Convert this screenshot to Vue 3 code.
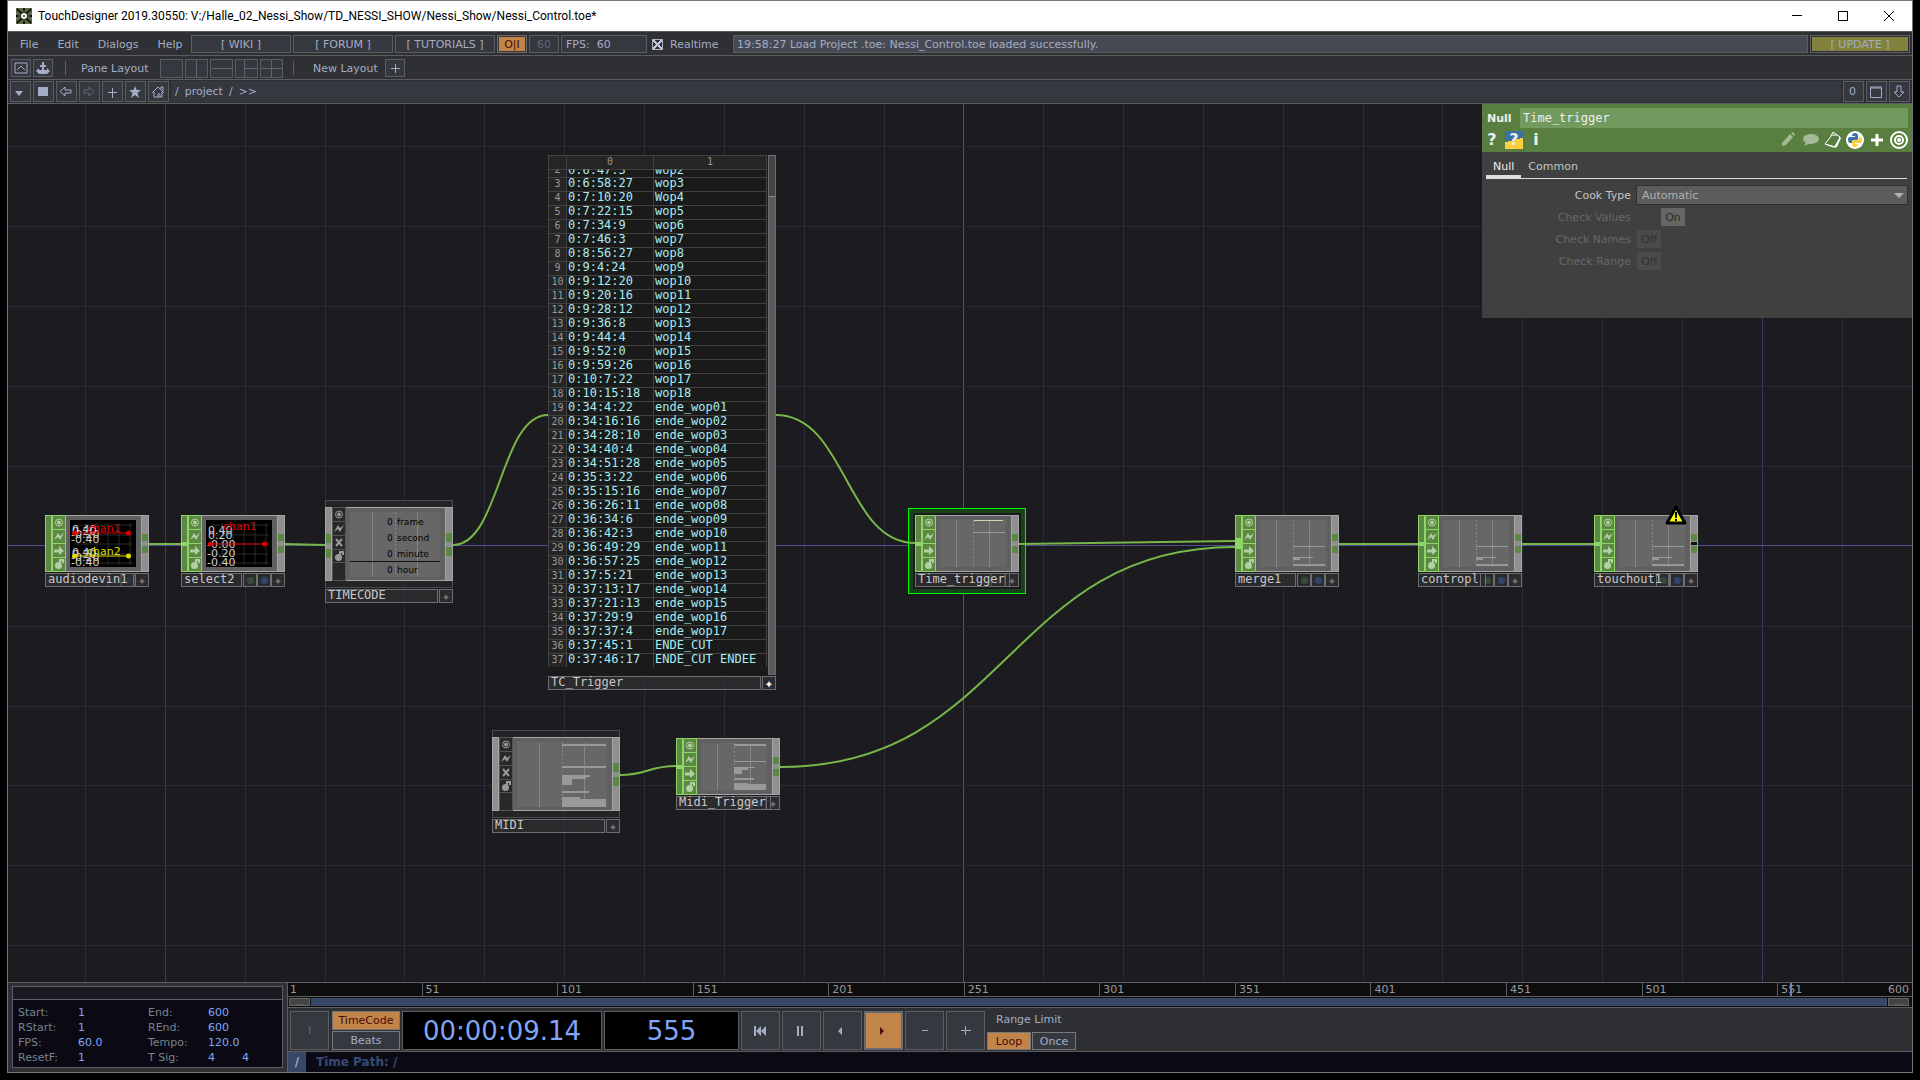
<script setup>
import { ref } from 'vue';

const links = ['WIKI', 'FORUM', 'TUTORIALS'];
const menus = ['File', 'Edit', 'Dialogs', 'Help'];
const layouts = ['', 'M11 0V18', 'M0 9H22', 'M9 0V18M9 9H22', 'M11 0V18M0 9H22'];
const realtime = ref(true);
const opName = ref('Time_trigger');
const cookType = ref('Automatic');

// Network grid
const gridX = [77, 157, 237, 317, 396, 476, 556, 636, 716, 796, 876, 955, 1035, 1115, 1195, 1275, 1355, 1434, 1514, 1594, 1674, 1754, 1834];
const gridY = [42, 122, 202, 282, 362, 441, 522, 602, 681, 761, 841];

const wires = [
  'M141 440H173',
  'M277 440L317 441',
  'M445 441C492 441 492 311 540 311',
  'M768 311C838 311 838 439 907 439',
  'M612 671C640 671 640 662 668 662',
  'M772 663C1000 663 1000 443 1227 443',
  'M1011 440L1227 437',
  'M1331 440H1410',
  'M1514 440H1586',
];

// Operators; bars are [x, y, w, h] inside the small viewer
const smallBars = [[33, 26, 32, 1], [33, 37, 20, 1], [33, 38, 7, 2], [33, 44, 32, 2]];
const nodes = [
  { name: 'audiodevin1', x: 37, y: 411, nameWidth: 89, faint: true, noInput: true, scope: [
    { name: 'chan1', color: '#e00000', y: 13, labelY: 12, ticks: [['0.40', 13], ['0.20', 15], ['-0.20', 18], ['-0.40', 23]] },
    { name: 'chan2', color: '#dcdc00', y: 36, labelY: 35, ticks: [['0.40', 36], ['0.20', 38], ['-0.20', 41], ['-0.40', 46]] },
  ] },
  { name: 'select2', x: 173, y: 411, nameWidth: 61, scope: [
    { name: 'chan1', color: '#e00000', y: 24, labelY: 10, ticks: [['0.40', 14], ['0.20', 19], ['-0.00', 28], ['-0.20', 37], ['-0.40', 46]] },
  ] },
  { name: 'Midi_Trigger', x: 668, y: 634, nameWidth: 95, faint: true, bars: [
    [33, 1, 32, 2], [33, 18, 32, 1], [33, 24, 21, 1], [33, 25, 14, 2], [33, 27, 8, 4],
    [33, 35, 20, 2], [33, 40, 14, 1], [33, 41, 32, 6],
  ] },
  { name: 'Time_trigger', x: 907, y: 411, nameWidth: 95, faint: true, selected: true, bars: [[33, 12, 32, 1]], current: true },
  { name: 'merge1', x: 1227, y: 411, nameWidth: 61, bars: smallBars, double: true },
  { name: 'contropl', x: 1410, y: 411, nameWidth: 68, bars: smallBars },
  { name: 'touchout1', x: 1586, y: 411, nameWidth: 75, bars: smallBars, warning: true },
];
const selected = nodes.find((node) => node.selected);

const timecodeRows = ['frame', 'second', 'minute', 'hour'];
const midiBars = [
  [45, 2, 44, 2], [45, 24, 44, 2], [45, 33, 28, 2], [45, 35, 24, 2], [45, 37, 10, 6],
  [45, 49, 27, 2], [45, 55, 18, 2], [45, 57, 44, 8],
];

const triggers = [
  ['0:6:47:3', 'wop2'], ['0:6:58:27', 'wop3'], ['0:7:10:20', 'Wop4'], ['0:7:22:15', 'wop5'],
  ['0:7:34:9', 'wop6'], ['0:7:46:3', 'wop7'], ['0:8:56:27', 'wop8'], ['0:9:4:24', 'wop9'],
  ['0:9:12:20', 'wop10'], ['0:9:20:16', 'wop11'], ['0:9:28:12', 'wop12'], ['0:9:36:8', 'wop13'],
  ['0:9:44:4', 'wop14'], ['0:9:52:0', 'wop15'], ['0:9:59:26', 'wop16'], ['0:10:7:22', 'wop17'],
  ['0:10:15:18', 'wop18'], ['0:34:4:22', 'ende_wop01'], ['0:34:16:16', 'ende_wop02'],
  ['0:34:28:10', 'ende_wop03'], ['0:34:40:4', 'ende_wop04'], ['0:34:51:28', 'ende_wop05'],
  ['0:35:3:22', 'ende_wop06'], ['0:35:15:16', 'ende_wop07'], ['0:36:26:11', 'ende_wop08'],
  ['0:36:34:6', 'ende_wop09'], ['0:36:42:3', 'ende_wop10'], ['0:36:49:29', 'ende_wop11'],
  ['0:36:57:25', 'ende_wop12'], ['0:37:5:21', 'ende_wop13'], ['0:37:13:17', 'ende_wop14'],
  ['0:37:21:13', 'ende_wop15'], ['0:37:29:9', 'ende_wop16'], ['0:37:37:4', 'ende_wop17'],
  ['0:37:45:1', 'ENDE_CUT'], ['0:37:46:17', 'ENDE_CUT ENDEE'],
];

const checks = [
  { label: 'Check Values', value: 'On' },
  { label: 'Check Names', value: 'Off' },
  { label: 'Check Range', value: 'Off' },
];

const rangeInfo = [
  ['Start:', '1', 'End:', '600'],
  ['RStart:', '1', 'REnd:', '600'],
  ['FPS:', '60.0', 'Tempo:', '120.0'],
  ['ResetF:', '1', 'T Sig:', '4', '4'],
];

// Timeline
const lastFrame = 600;
const frame = ref(555);
const ticks = [1, 51, 101, 151, 201, 251, 301, 351, 401, 451, 501, 551];
const framePos = (f) => `${((f - 1) / (lastFrame - 1)) * 100}%`;

const transport = [
  { label: 'Jump to start', d: 'M0 2H2V12H0ZM7 2V12L2 7ZM12 2V12L7 7Z' },
  { label: 'Pause', d: 'M2 2H4V12H2ZM6 2H8V12H6Z' },
  { label: 'Play reverse', d: 'M6 3V11L2 7Z' },
  { label: 'Play', d: 'M3 3V11L7 7Z', active: true },
  { label: 'Step back', d: 'M4 6H10V7H4Z' },
  { label: 'Step forward', d: 'M2 6H12V7H2ZM6 2H7V11H6Z' },
];
</script>

<template>
  <div class="window">
    <header class="titlebar">
      <svg class="app-icon" viewBox="0 0 16 16">
        <rect width="16" height="16" fill="#5f6b45" />
        <path d="M1 1L6 6M15 1L10 6M1 15L6 10M15 15L10 10M8 0V3M8 13V16M0 8H3M13 8H16" stroke="#15180f" stroke-width="2" />
        <circle cx="8" cy="8" r="4" fill="#20241a" />
        <circle cx="8" cy="8" r="3" fill="#f4f4e8" />
        <circle cx="8" cy="8" r="1" fill="#444" />
      </svg>
      <h1>TouchDesigner 2019.30550: V:/Halle_02_Nessi_Show/TD_NESSI_SHOW/Nessi_Show/Nessi_Control.toe*</h1>
      <div class="window-buttons">
        <button aria-label="Minimize"><svg viewBox="0 0 12 12"><path d="M1 5.5H11" /></svg></button>
        <button aria-label="Maximize"><svg viewBox="0 0 12 12"><path d="M1.5 1.5H10.5V10.5H1.5Z" /></svg></button>
        <button aria-label="Close"><svg viewBox="0 0 12 12"><path d="M1 1L11 11M11 1L1 11" /></svg></button>
      </div>
    </header>

    <!-- Main menu -->
    <div class="bar menu-bar">
      <nav class="menus">
        <button v-for="menu in menus" :key="menu">{{ menu }}</button>
      </nav>
      <a v-for="link in links" :key="link" class="box link-box" href="#">[ {{ link }} ]</a>
      <button class="box io-button">O|I</button>
      <span class="box rate-box">60</span>
      <span class="box fps-box">FPS:&nbsp; 60</span>
      <label class="realtime"><input v-model="realtime" type="checkbox" />Realtime</label>
      <output class="box message">19:58:27 Load Project .toe: Nessi_Control.toe loaded successfully.</output>
      <button class="box update">[ UPDATE ]</button>
    </div>

    <!-- Pane layouts -->
    <div class="bar layout-bar">
      <button class="box icon-box" aria-label="Palette">
        <svg viewBox="0 0 14 14"><path d="M1 2H13V12H1ZM3 9L7 5L11 9" /></svg>
      </button>
      <button class="box icon-box" aria-label="Anchor">
        <svg viewBox="0 0 14 14"><path class="fill" d="M6 1H8V4H10V6H8V9H11V7L14 10L11 13H3L0 10L3 7V9H6V6H4V4H6Z" /></svg>
      </button>
      <i class="sep"></i>
      <span class="pane-label">Pane Layout</span>
      <div class="layouts">
        <button v-for="(d, i) in layouts" :key="i" class="layout" :aria-label="'Layout ' + (i + 1)">
          <svg viewBox="0 0 22 18"><path :d="d" /></svg>
        </button>
      </div>
      <i class="sep"></i>
      <span class="new-label">New Layout</span>
      <button class="box icon-box" aria-label="Add layout">
        <svg viewBox="0 0 14 14"><path d="M7.5 3V12M3 7.5H12" /></svg>
      </button>
    </div>

    <!-- Network path -->
    <div class="bar path-bar">
      <button class="box icon-box" aria-label="Pane type"><svg viewBox="0 0 14 14"><path class="fill" d="M2 6H10L6 11Z" /></svg></button>
      <button class="box icon-box" aria-label="Stop"><svg viewBox="0 0 14 14"><path class="fill" d="M2 2H12V11H2Z" /></svg></button>
      <button class="box icon-box" aria-label="Back"><svg viewBox="0 0 14 14"><path d="M1 6.5L6 2V5H12V8H6V11Z" /></svg></button>
      <button class="box icon-box dim" aria-label="Forward"><svg viewBox="0 0 14 14"><path d="M12 6.5L7 2V5H2V8H7V11Z" /></svg></button>
      <button class="box icon-box" aria-label="Add operator"><svg viewBox="0 0 14 14"><path d="M7.5 3V13M3 7.5H12" /></svg></button>
      <button class="box icon-box" aria-label="Bookmark"><svg viewBox="0 0 14 14"><path class="fill" d="M7 1L8.600 5H13L9.500 8L11 13L7 10L3 13L4.500 8L1 5H5.400Z" /></svg></button>
      <button class="box icon-box" aria-label="Home"><svg viewBox="0 0 14 14"><path d="M1 8L7 2L13 8M3 7V12H11V7M7 12V9H9V12M10 4V2H12V6" /></svg></button>
      <div class="path">
        <span>/</span><a href="#">project</a><span>/</span><a href="#">&gt;&gt;</a>
      </div>
      <div class="pane-buttons">
        <button class="box icon-box">0</button>
        <button class="box icon-box" aria-label="Maximize pane"><svg viewBox="0 0 14 14"><path d="M1.500 3V12.500H12.500V3M1 3H13M1 2H13" /></svg></button>
        <button class="box icon-box" aria-label="Collapse pane"><svg viewBox="0 0 14 14"><path d="M5 1H9V7H12L7 12L2 7H5Z" /></svg></button>
      </div>
    </div>

    <main class="network">
      <svg class="canvas-lines">
        <line v-for="(x, i) in gridX" :key="'x' + x" :x1="x + .5" :x2="x + .5" y1="0" y2="100%" :class="{ major: i % 10 === 1, origin: i === 11 }" />
        <line v-for="y in gridY" :key="'y' + y" x1="0" x2="100%" :y1="y + .5" :y2="y + .5" :class="{ origin: y === 441 }" />
        <!-- Frame round the selected operator, under the wires -->
        <rect class="selection" :x="selected.x - 6.5" :y="selected.y - 6.5" width="117" height="85" />
        <rect class="selection-gap" :x="selected.x - 2" :y="selected.y - 2" width="108" height="76" />
        <path v-for="d in wires" :key="d" :d="d" class="wire" />
      </svg>

      <section
        v-for="node in nodes"
        :key="node.name"
        class="node"
        :class="{ cut: node.warning }"
        :style="{ left: node.x + 'px', top: node.y + 'px' }"
      >
        <div class="node-body">
          <div class="input"><i v-if="!node.noInput" :class="{ double: node.double }"></i></div>
          <svg class="flags-column" viewBox="0 0 14 57">
            <path class="lines" d="M.5 .5H13.500V56.500H.5ZM0 14.500H14M0 28.500H14M0 42.500H14" />
            <circle class="ring" cx="7" cy="7.500" r="3.500" /><circle class="glyph" cx="7" cy="7.500" r="2" />
            <path class="glyph" d="M2 25L6 18L8 21L12 18L8 25L6 22Z" />
            <path class="glyph" d="M2 34.500H7V31L12 36L7 40V37.500H2Z" />
            <path class="ring" d="M8 48V45H11V48" /><circle class="glyph" cx="6.500" cy="50.500" r="3.500" />
          </svg>
          <div class="viewer-frame">
            <svg v-if="node.scope" class="scope" viewBox="0 0 66 47">
              <path class="scope-grid" d="M5 5H63M5 15H63M5 24H63M5 34H63M5 43H63M16 3V45M27 3V45M38 3V45M49 3V45M60 3V45" />
              <g v-for="chan in node.scope" :key="chan.name">
                <text v-for="tick in chan.ticks" :key="tick[0]" :x="tick[0].length > 4 ? 1 : 2" :y="tick[1]" class="tick-label">{{ tick[0] }}</text>
                <text x="17" :y="chan.labelY" :fill="chan.color">{{ chan.name }}</text>
                <path :d="`M4 ${chan.y}H59`" :stroke="chan.color" />
                <circle cx="4.500" :cy="chan.y" r="2.500" :fill="chan.color" />
                <circle cx="58.500" :cy="chan.y" r="2.500" :fill="chan.color" />
              </g>
            </svg>
            <svg v-else class="viewer" viewBox="0 0 66 47">
              <path class="rule" d="M16.500 1V47M49.500 1V47" />
              <path class="rule dotted" d="M33.500 0V47" />
              <rect v-for="(b, i) in node.bars" :key="i" :x="b[0]" :y="b[1]" :width="b[2]" :height="b[3]" />
              <rect v-if="node.current" class="current" x="34" y="0" width="29" height="1" />
            </svg>
          </div>
          <div class="output"><i></i><i></i></div>
        </div>
        <div class="name-bar">
          <span class="name" :style="{ width: node.nameWidth + 'px' }">{{ node.name }}</span>
          <div class="flags" :class="{ faint: node.faint }"><i class="green"></i><i class="blue"></i><i class="plus">✦</i></div>
        </div>
        <svg v-if="node.warning" class="warning" viewBox="0 0 22 20">
          <path d="M11 2L20 18H2Z" fill="#ff0" stroke="#000" stroke-width="3" stroke-linejoin="round" />
          <path d="M11 7V13M11 14V16" stroke="#000" stroke-width="2" />
        </svg>
      </section>

      <!-- Component style operators -->
      <section v-for="comp in ['TIMECODE', 'MIDI']" :key="comp" class="node comp" :class="comp.toLowerCase()">
        <div class="comp-frame">
          <div class="node-body">
            <div class="input"><template v-if="comp === 'TIMECODE'"><b></b><b></b></template></div>
            <svg class="flags-column" viewBox="0 0 14 74">
              <path class="lines" d="M.5 .5H13.500V73.500H.5ZM0 14.500H14M0 28.500H14M0 42.500H14M0 55.500H14" />
              <circle class="ring" cx="7" cy="7.500" r="3.500" /><circle class="glyph" cx="7" cy="7.500" r="2" />
              <path class="glyph" d="M2 25L6 18L8 21L12 18L8 25L6 22Z" />
              <path class="ring" d="M4 32L10 39M10 32L4 39" />
              <path class="ring" d="M8 48V45H11V48" /><circle class="glyph" cx="6.500" cy="50.500" r="3.500" />
            </svg>
            <div class="viewer-frame">
              <svg class="viewer" viewBox="0 0 90 65">
                <path class="rule" d="M22.500 1V65M67.500 1V65" />
                <path class="rule dotted" d="M45.500 0V65" />
                <template v-if="comp === 'TIMECODE'">
                  <g v-for="(row, i) in timecodeRows" :key="row" class="channel">
                    <text x="37" :y="13 + i * 16">0</text>
                    <text x="47" :y="13 + i * 16">{{ row }}</text>
                  </g>
                  <path d="M0 49.500H90" stroke="#111" />
                </template>
                <template v-else>
                  <rect v-for="(b, i) in midiBars" :key="i" :x="b[0]" :y="b[1]" :width="b[2]" :height="b[3]" />
                </template>
              </svg>
            </div>
            <div class="output"><i></i><i></i></div>
          </div>
        </div>
        <div class="name-bar">
          <span class="name">{{ comp }}</span>
          <i class="plus">✦</i>
        </div>
      </section>

      <!-- Trigger list -->
      <section class="node trigger">
        <div class="trigger-view">
          <div class="trigger-scroll">
            <table>
              <thead>
                <tr><th></th><th>0</th><th>1</th></tr>
              </thead>
              <tbody>
                <tr v-for="(row, i) in triggers" :key="i">
                  <th>{{ i + 2 }}</th>
                  <td>{{ row[0] }}</td>
                  <td>{{ row[1] }}</td>
                </tr>
              </tbody>
            </table>
          </div>
          <div class="trigger-track"></div>
        </div>
        <div class="name-bar">
          <span class="name">TC_Trigger</span>
          <i class="plus bright">✦</i>
        </div>
      </section>

      <!-- Parameters -->
      <aside class="params">
        <div class="params-head">
          <div class="params-name">
            <label for="op-name">Null</label>
            <input id="op-name" v-model="opName" type="text" />
          </div>
          <div class="params-tools">
            <button aria-label="Help" class="help">?</button>
            <button aria-label="Python help" class="py-help">?</button>
            <button aria-label="Info" class="info">i</button>
            <span class="grow"></span>
            <button aria-label="Edit" class="dim"><svg viewBox="0 0 18 18"><path fill="#fff" d="M2 12L10 3L13 6L6 14L2 15ZM11 2L13 1L15 4L14 5Z" /></svg></button>
            <button aria-label="Comment" class="dim"><svg viewBox="0 0 18 18"><ellipse cx="9" cy="8" rx="8" ry="5" fill="#fff" /><path d="M4 11L2 15L9 12Z" fill="#fff" /></svg></button>
            <button aria-label="Clipboard"><svg viewBox="0 0 18 18"><path d="M8 4L1 13L9 16H12L16 6L13 4ZM7 5L9 1L13 4M1 13L12 16" fill="none" stroke="#fff" /><path d="M10 16L16 6L17 7L13 16Z" fill="#fff" /></svg></button>
            <button aria-label="Python"><svg viewBox="0 0 18 18">
              <circle cx="9" cy="9" r="9" fill="#fff" />
              <path d="M6 5Q6 2 9 2Q12 2 12 5V8Q12 9 10 9H7Q6 9 6 12H4Q2 12 2 8Q2 6 4 6H9V5Z" fill="#3b70a4" />
              <path d="M12 13Q12 16 9 16Q6 16 6 13V11Q6 9 8 9H11Q13 9 13 6H14Q16 6 16 10Q16 12 14 12H9V13Z" fill="#fdcf40" />
            </svg></button>
            <button aria-label="Add"><svg viewBox="0 0 18 18"><path d="M9 3V15M3 9H15" stroke="#fff" stroke-width="3" /></svg></button>
            <button aria-label="Target"><svg viewBox="0 0 18 18"><g fill="none" stroke="#fff" stroke-width="2"><circle cx="9" cy="9" r="8" /><circle cx="9" cy="9" r="4" /></g><circle cx="9" cy="9" r="2" fill="#fff" /></svg></button>
          </div>
        </div>
        <div class="tabs">
          <button class="active">Null</button>
          <button>Common</button>
        </div>
        <div class="param">
          <label for="cook-type">Cook Type</label>
          <div class="select-wrap">
            <select id="cook-type" v-model="cookType"><option>Automatic</option></select>
          </div>
        </div>
        <div v-for="check in checks" :key="check.label" class="param disabled">
          <label :for="check.label">{{ check.label }}</label>
          <button :id="check.label" :class="{ on: check.value === 'On' }" disabled>{{ check.value }}</button>
        </div>
      </aside>
    </main>

    <footer class="timeline">
      <div class="range-panel">
        <div class="range-head"></div>
        <div class="range-grid">
          <div v-for="row in rangeInfo" :key="row[0]" class="range-row">
            <span>{{ row[0] }}</span><b>{{ row[1] }}</b><span>{{ row[2] }}</span><b>{{ row[3] }}</b><b>{{ row[4] }}</b>
          </div>
        </div>
      </div>
      <div class="time-main">
        <div class="ruler">
          <span v-for="t in ticks" :key="t" class="tick" :style="{ left: framePos(t) }">{{ t }}</span>
          <span class="last-tick">{{ lastFrame }}</span>
          <i class="playhead" :style="{ left: framePos(frame) }"></i>
        </div>
        <div class="work-range">
          <button aria-label="Range start">...</button>
          <i></i>
          <button aria-label="Range end">...</button>
        </div>
        <div class="controls">
          <button class="control marker">I</button>
          <div class="mode">
            <button class="active">TimeCode</button>
            <button>Beats</button>
          </div>
          <output class="display timecode">00:00:09.14</output>
          <output class="display frames">{{ frame }}</output>
          <button v-for="item in transport" :key="item.label" class="control" :class="{ active: item.active }" :aria-label="item.label">
            <svg viewBox="0 0 14 14"><path :d="item.d" /></svg>
          </button>
          <div class="limit">
            <span>Range Limit</span>
            <div class="limit-buttons">
              <button class="active">Loop</button>
              <button>Once</button>
            </div>
          </div>
        </div>
        <div class="time-path"><button>/</button><span>Time Path: /</span></div>
      </div>
    </footer>
  </div>
</template>

<style>
body {
  margin: 0;
  background: #000;
}
</style>

<style scoped>
* {
  box-sizing: border-box;
}

.window {
  display: flex;
  flex-direction: column;
  height: calc(100vh - 7px);
  min-height: 900px;
  margin: 0 7px 7px;
  border: 1px solid #77777a;
  background: #2f3033;
  color: #a3adc6;
  font-family: "DejaVu Sans", sans-serif;
  font-size: 11px;
  overflow: hidden;
}

button,
input,
select {
  margin: 0;
  padding: 0;
  border: 0;
  background: none;
  color: inherit;
  font: inherit;
}

a {
  color: inherit;
  text-decoration: none;
}

svg {
  display: block;
  flex: none;
}

/* Title bar */
.titlebar {
  display: flex;
  align-items: center;
  flex: none;
  height: 30px;
  padding-left: 8px;
  background: #fff;
  color: #000;
}

.app-icon {
  width: 16px;
  height: 16px;
}

h1 {
  flex: 1;
  margin: 0 0 0 6px;
  font: 12px Roboto, sans-serif;
}

.window-buttons {
  display: flex;
}

.window-buttons button {
  display: grid;
  place-items: center;
  width: 46px;
  height: 28px;
}

.window-buttons svg {
  width: 12px;
  height: 12px;
  fill: none;
  stroke: #000;
}

/* Toolbars */
.bar {
  display: flex;
  align-items: center;
  flex: none;
  height: 24px;
  padding-top: 1px;
  border-top: 1px solid #5c5d60;
  white-space: nowrap;
}

.box {
  display: flex;
  align-items: center;
  justify-content: center;
  flex: none;
  height: 18px;
  border: 1px solid #5c5d60;
  background: #363840;
}

.menu-bar {
  gap: 2px;
  padding-right: 2px;
}

.menus {
  display: flex;
  gap: 19px;
  width: 181px;
  padding-left: 12px;
}

.link-box {
  width: 100px;
}

.io-button {
  width: 30px;
  background: #c28549;
  border-color: #6a6a6c;
  color: #4a0808;
  box-shadow: inset 0 0 0 1px #3a3634;
}

.rate-box {
  width: 30px;
  color: #606470;
}

.fps-box {
  justify-content: flex-start;
  width: 86px;
  padding-left: 4px;
}

.realtime {
  display: flex;
  align-items: center;
  gap: 7px;
  width: 82px;
  padding-left: 3px;
}

.realtime input {
  width: 11px;
  height: 11px;
  appearance: none;
  border: 1px solid #b0b4c0;
  background:
    linear-gradient(45deg, transparent 40%, #c0c6d8 40% 60%, transparent 60%),
    linear-gradient(-45deg, transparent 40%, #c0c6d8 40% 60%, transparent 60%);
}

.message {
  flex: 1;
  justify-content: flex-start;
  padding-left: 3px;
  background: #474a52;
}

.update {
  width: 100px;
  background: #82813d;
  box-shadow: inset 0 0 0 1px #2f3033;
}

.layout-bar {
  padding-left: 3px;
}

.layout-bar .icon-box {
  width: 20px;
  margin-right: 2px;
}

.icon-box svg {
  width: 14px;
  height: 14px;
  fill: none;
  stroke: #a3adc6;
}

.icon-box .fill {
  fill: #a3adc6;
  stroke: none;
}

.sep {
  width: 1px;
  height: 14px;
  margin: 0 10px;
  background: #5c5d60;
}

.pane-label {
  width: 84px;
  padding-left: 5px;
}

.layouts {
  display: flex;
  gap: 2px;
}

.layout {
  width: 23px;
  height: 19px;
  border: 1px solid #5c5d60;
  background: #363840;
}

.layout svg {
  width: 21px;
  height: 17px;
  fill: none;
  stroke: #66686e;
}

.new-label {
  width: 81px;
  padding-left: 9px;
}

.path-bar {
  gap: 2px;
  height: 25px;
  padding: 0 2px;
  border-bottom: 1px solid #5c5d60;
}

.path-bar .icon-box {
  width: 21px;
  height: 21px;
  padding-right: 2px;
}

.path-bar .dim svg {
  opacity: .4;
}

.path {
  display: flex;
  align-items: center;
  flex: 1;
  gap: 6px;
  height: 21px;
  padding-left: 4px;
  background: #363840;
}

.pane-buttons {
  display: flex;
  gap: 2px;
}

/* Network editor */
.network {
  position: relative;
  flex: 1;
  overflow: hidden;
  background: #1b1b20;
}

.canvas-lines {
  width: 100%;
  height: 100%;
  stroke: #2b2a3c;
}

.canvas-lines .major {
  stroke: #3c3864;
}

.canvas-lines .origin {
  stroke: #534f8d;
}

.selection {
  fill: #164418;
  stroke: #00f800;
}

.selection-gap {
  fill: #1b1b20;
  stroke: none;
}

.wire {
  fill: none;
  stroke: #76b749;
  stroke-width: 2;
}

.node {
  position: absolute;
  width: 104px;
}

.node-body {
  display: flex;
  height: 57px;
  background: #606060;
}

.input {
  width: 7px;
  padding-top: 26px;
  border: 1px solid #8fd466;
  background: #5d8844;
}

.input i {
  display: block;
  height: 4px;
  margin: 0 -1px;
  background: #8fd466;
}

.input .double {
  height: 11px;
  margin-top: -4px;
}

.flags-column {
  width: 14px;
  background: #5d8844;
}

.lines {
  fill: none;
  stroke: #8fd466;
}

.glyph {
  fill: #b3cfa4;
}

.ring {
  fill: none;
  stroke: #b3cfa4;
  stroke-width: 2;
}

.flags-column circle.ring {
  stroke-width: 1;
}

.viewer-frame {
  flex: 1;
  padding: 4px;
  border: solid #a5a5a8;
  border-width: 1px 0;
}

.viewer,
.scope {
  width: 66px;
  height: 47px;
  background: #676767;
}

.viewer rect {
  fill: #999;
}

.viewer .current {
  fill: #d5d5aa;
}

.rule {
  stroke: #868686;
}

.dotted {
  stroke-dasharray: 2 2;
}

.scope {
  background: #000;
  overflow: hidden;
}

.scope-grid {
  stroke: #2a2a2a;
}

.scope text {
  font-size: 11px;
}

.scope .tick-label {
  fill: #ccc;
}

.output {
  display: flex;
  flex-direction: column;
  justify-content: center;
  gap: 5px;
  width: 8px;
  border: 1px solid #a5a5a8;
  background: #8f8f8f;
}

.output i {
  height: 7px;
  background: #5d8844;
}

.cut .output {
  background: linear-gradient(#8f8f8f 26px, #111 26px 29px, #8f8f8f 29px);
}

.name-bar {
  position: relative;
  display: flex;
  height: 14px;
  margin-top: 1px;
  background: rgba(50, 50, 52, .7);
  color: #c8c8c8;
  font: 12px/11px "DejaVu Sans Mono", monospace;
}

.name {
  z-index: 1;
  padding-left: 2px;
  border: 1px solid #6e6e72;
  white-space: nowrap;
}

.flags {
  position: absolute;
  inset: 0 0 0 auto;
  display: flex;
}

.flags i,
.plus {
  display: grid;
  place-items: center;
  width: 14px;
  border: 1px solid #6e6e72;
  color: #707070;
  font-size: 14px;
  font-style: normal;
}

.flags.faint i:not(.plus) {
  opacity: .4;
}

.green::before,
.blue::before {
  content: "";
  width: 7px;
  height: 7px;
  border-radius: 50%;
  background: #3b4a38;
}

.blue::before {
  background: #2f456e;
}

.warning {
  position: absolute;
  top: -10px;
  right: 11px;
  width: 22px;
  height: 20px;
}

/* Component operators */
.comp {
  width: 128px;
}

.timecode.node {
  left: 317px;
  top: 396px;
}

.midi {
  left: 484px;
  top: 626px;
}

.comp-frame {
  padding: 6px 0;
  border: solid #4b4b4f;
  border-width: 1px 0;
  background: rgba(45, 45, 45, .5);
  box-shadow: inset 1px 0 #4b4b4f, inset -1px 0 #4b4b4f;
}

.comp .node-body {
  height: 74px;
}

.comp .input {
  display: flex;
  flex-direction: column;
  gap: 6px;
  border-color: #a5a5a8;
  background: #8f8f8f;
}

.input b {
  height: 9px;
  background: #5d8844;
}

.comp .flags-column {
  height: 74px;
  background: #292929;
}

.comp .lines {
  stroke: #555;
}

.comp .glyph {
  fill: #999;
}

.comp .ring {
  stroke: #999;
}

.comp .viewer {
  width: 90px;
  height: 65px;
}

.comp .output i {
  height: 9px;
}

.channel text {
  font-size: 9px;
  fill: #000;
}

.comp .name,
.trigger .name {
  flex: 1;
  margin-right: 1px;
}

/* Trigger list */
.trigger {
  left: 540px;
  top: 51px;
  width: 228px;
}

.trigger-view {
  display: flex;
  justify-content: space-between;
  height: 520px;
  background: #1a1a1b;
}

.trigger-scroll {
  width: 219px;
  height: 512px;
  overflow: hidden;
}

table {
  width: 219px;
  border-collapse: collapse;
  table-layout: fixed;
  color: #a8edf2;
  font: 12px "DejaVu Sans Mono", monospace;
}

tr {
  height: 14px;
}

th,
td {
  height: 14px;
  padding: 0 0 0 1px;
  border: 1px solid #424242;
  text-align: left;
  line-height: 10px;
  vertical-align: top;
  white-space: nowrap;
}

th {
  padding: 0;
  background: #252526;
  color: #999;
  font-size: 10px;
  font-weight: normal;
  line-height: 12px;
  text-align: center;
}

thead th:nth-child(1) {
  width: 18px;
}

thead th:nth-child(2) {
  width: 87px;
}

/* The first listed row is scrolled halfway under the header */
tbody tr:first-child,
tbody tr:first-child > * {
  height: 8px;
  line-height: 0;
  clip-path: inset(0);
}

.trigger-track {
  width: 8px;
  border: 1px solid #6c6c6c;
  background: linear-gradient(#444 40px, #858585 40px 41px, #5a5a5a 41px);
}

.plus.bright {
  color: #fff;
}

/* Parameters */
.params {
  position: absolute;
  top: 0;
  right: 0;
  width: 430px;
  height: 214px;
  background: #404040;
  color: #c4c4c4;
}

.params-head {
  height: 48px;
  padding: 4px 4px 0 5px;
  background: #597f40;
  color: #eee;
}

.params-name {
  display: flex;
  align-items: center;
}

.params-name label {
  width: 33px;
  font-weight: bold;
}

.params-name input {
  flex: 1;
  height: 20px;
  padding-left: 3px;
  background: #739a5e;
  font: 12px "DejaVu Sans Mono", monospace;
}

.params-tools {
  display: flex;
  align-items: center;
  gap: 4px;
  height: 24px;
}

.params-tools button {
  width: 18px;
  height: 18px;
  font-weight: bold;
  font-size: 16px;
  line-height: 18px;
}

.params-tools svg {
  width: 18px;
  height: 18px;
}

.params-tools .help {
  width: 10px;
  margin-right: 4px;
}

.params-tools .py-help {
  background: linear-gradient(165deg, #3b70a4 50%, #fdcf40 50%);
}

.params-tools .dim {
  opacity: .45;
}

.grow {
  flex: 1;
}

.tabs {
  display: flex;
  height: 27px;
  margin: 0 5px 5px 4px;
  border-bottom: 1px solid #ddd;
}

.tabs button {
  margin-bottom: -1px;
  padding: 6px 7px 0;
  border-bottom: 4px solid transparent;
}

.tabs .active {
  border-color: #ddd;
  color: #eee;
}

.param {
  display: flex;
  align-items: center;
  height: 22px;
  padding-right: 4px;
}

.param label {
  width: 149px;
  margin-right: 5px;
  text-align: right;
}

.select-wrap {
  position: relative;
  flex: 1;
}

.select-wrap::after {
  content: "";
  position: absolute;
  top: 8px;
  right: 4px;
  border: 5px solid transparent;
  border-top-color: #b0b0b0;
  border-bottom: 0;
}

select {
  width: 100%;
  height: 20px;
  padding-left: 5px;
  appearance: none;
  border: 1px solid #303030;
  background: #5c5c5c;
  color: #b0b0b0;
}

.disabled {
  color: #686868;
}

.disabled button {
  width: 24px;
  height: 18px;
  margin-left: 1px;
  background: #4a4a4a;
  color: #333;
}

.disabled .on {
  margin-left: 25px;
  background: #666;
  color: #2c2c2c;
}

/* Timeline */
.timeline {
  display: flex;
  flex: none;
  height: 90px;
  border-top: 1px solid #5c5d60;
}

.range-panel {
  width: 271px;
  margin: 3px 4px 4px;
  border: 1px solid #5c5d66;
  background: #0b0a14;
}

.range-head {
  height: 13px;
  border-bottom: 1px solid #5c5d66;
  background: #191922;
}

.range-grid {
  padding-top: 5px;
}

.range-row {
  display: grid;
  grid-template-columns: 60px 70px 60px 34px 30px;
  height: 15px;
  padding-left: 5px;
  color: #75828f;
  line-height: 15px;
}

.range-row b {
  color: #80a5f5;
  font-weight: normal;
}

.time-main {
  flex: 1;
  border-left: 1px solid #5c5d60;
}

.ruler {
  position: relative;
  height: 14px;
  border-bottom: 1px solid #5c5d60;
  background: #0e0e0e;
  color: #999;
}

.tick {
  position: absolute;
  height: 13px;
  margin-left: -2px;
  padding-left: 3px;
  border-left: 1px solid #5c5d60;
  line-height: 13px;
}

.tick:first-child {
  border-color: transparent;
}

.last-tick {
  position: absolute;
  right: 3px;
  line-height: 13px;
}

.playhead {
  position: absolute;
  width: 2px;
  height: 13px;
  background: #6a83b8;
}

.work-range {
  display: flex;
  gap: 1px;
  height: 11px;
  padding: 1px 3px 1px 1px;
  border-bottom: 1px solid #5c5d60;
  background: #0e0e0e;
}

.work-range i {
  flex: 1;
  background: #374867;
}

.work-range button {
  width: 21px;
  border: 1px solid #666;
  background: #444;
  color: #888;
  font-size: 9px;
  line-height: 1px;
}

.controls {
  display: flex;
  gap: 2px;
  height: 43px;
  padding: 3px 2px 1px;
}

.control,
.display {
  display: grid;
  place-items: center;
  width: 39px;
  height: 39px;
  border: 1px solid #5c5d60;
  background: #363840;
}

.control svg {
  width: 14px;
  height: 14px;
  fill: #a3adc6;
}

.control.active {
  border: 2px solid #666a70;
  background: #c28549;
}

.control.active svg {
  fill: #4a0808;
}

.marker {
  color: #666a74;
}

.mode {
  display: flex;
  flex-direction: column;
  gap: 1px;
  width: 68px;
  margin-left: 1px;
}

.mode button,
.limit button {
  height: 19px;
  border: 1px solid #77787a;
  background: #363840;
}

.mode .active,
.limit .active {
  background: #c28549;
  color: #4a0808;
}

.display {
  background: #000;
  color: #80a5f5;
  font-size: 26px;
}

.display.timecode {
  width: 200px;
}

.display.frames {
  width: 135px;
}

.limit {
  display: flex;
  flex-direction: column;
  justify-content: space-between;
}

.limit span {
  padding: 2px 0 0 9px;
}

.limit-buttons {
  display: flex;
  gap: 1px;
}

.limit button {
  width: 44px;
  height: 18px;
}

.time-path {
  display: flex;
  align-items: center;
  height: 21px;
  border-top: 1px solid #5c5d60;
  background: #0b0a14;
  color: #374a75;
  font-weight: bold;
  font-size: 12px;
}

.time-path button {
  width: 18px;
  height: 20px;
  margin-right: 10px;
  background: #374867;
  color: #a3adc6;
}
</style>
